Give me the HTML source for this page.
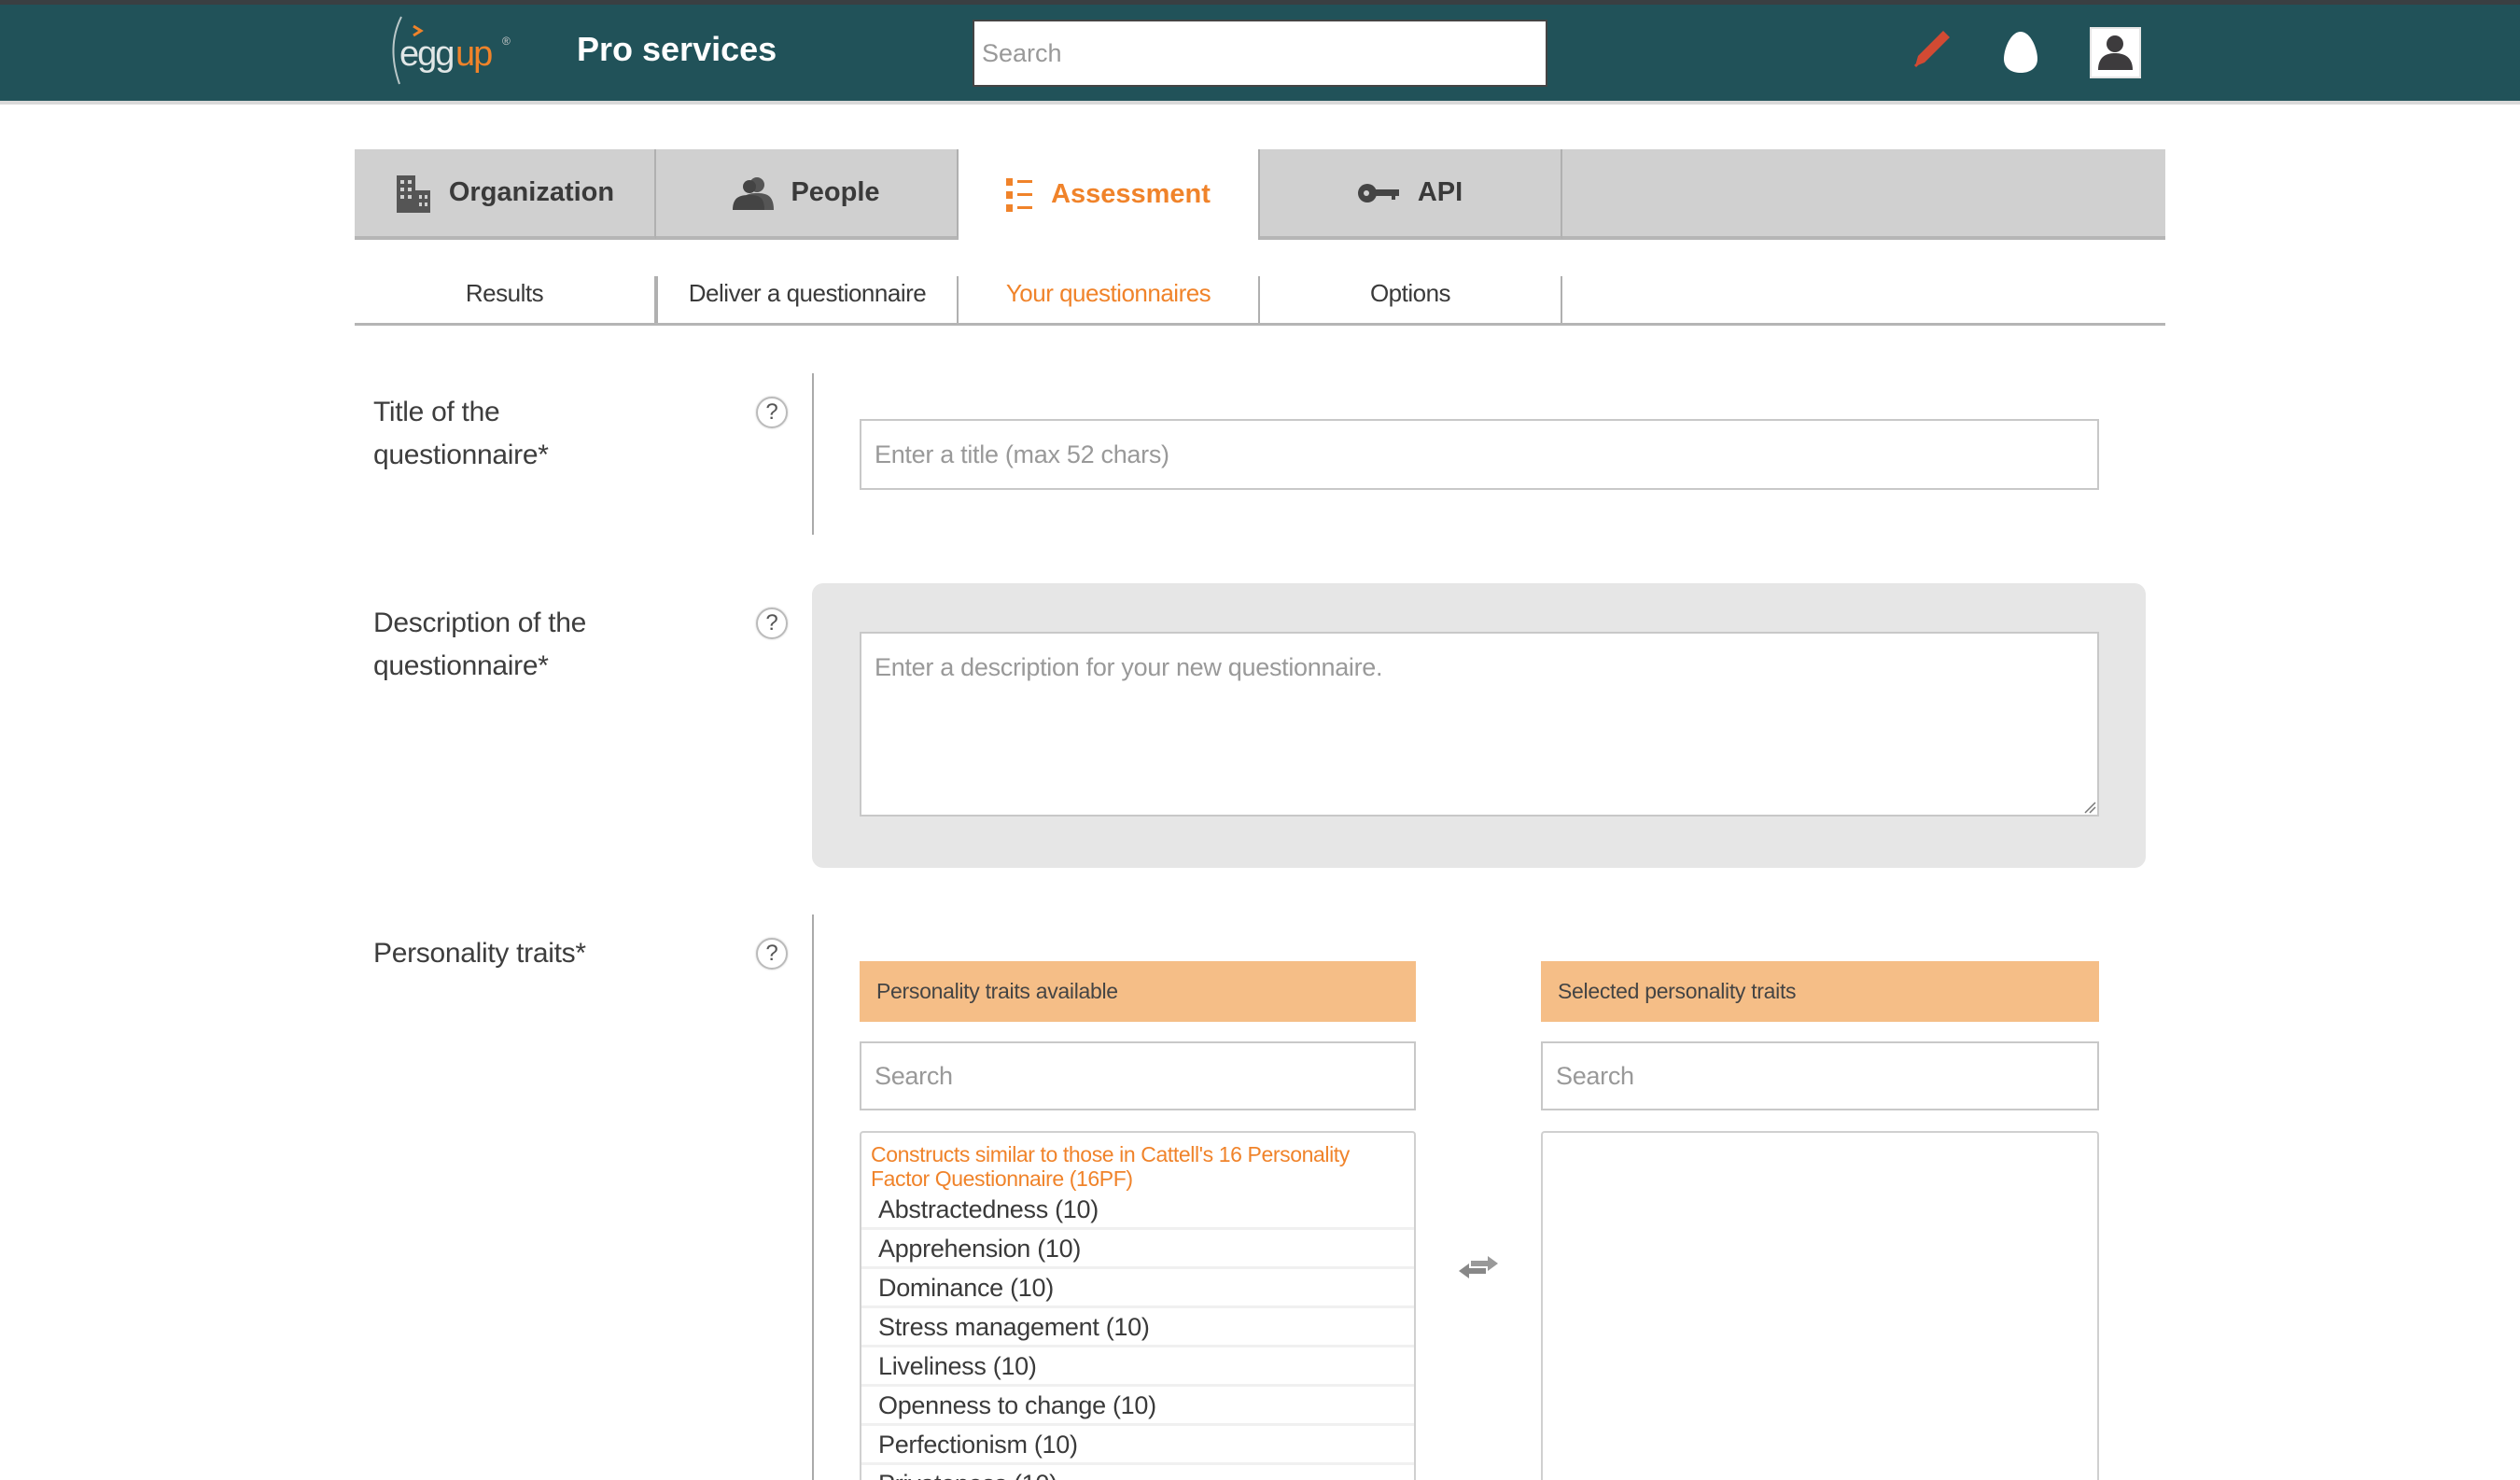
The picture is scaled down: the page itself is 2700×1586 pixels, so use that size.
<!DOCTYPE html>
<html style="overflow:hidden;height:1586px"><head><meta charset="utf-8"><style>
*{margin:0;padding:0;box-sizing:border-box}
body{width:2700px;height:1586px;overflow:hidden;background:#fff;font-family:"Liberation Sans",sans-serif;color:#3a3a3a;position:relative}
.a{position:absolute}
.hdr{left:0;top:0;width:2700px;height:112px;background:#215259;border-top:5px solid #3a3f42;border-bottom:4px solid #d9d9d9}
.tab{top:160px;height:97px;background:#d0d0d0;border-right:2px solid #b0b0b0;border-bottom:4px solid #b5b5b5;font-weight:bold;font-size:29px;display:flex;align-items:center;justify-content:center;gap:18px;color:#3a3a3a}
.sub{top:296px;height:50px;border-right:2px solid #b0b0b0;font-size:26px;text-align:center;line-height:36px;letter-spacing:-0.5px}
.lbl{font-size:30px;line-height:46px;color:#3d3d3d;letter-spacing:-0.3px}
.help{width:34px;height:34px;border:2px solid #bbb;border-radius:50%;font-size:24px;text-align:center;line-height:30px;color:#555;box-shadow:0 0 2px #ccc}
.vl{width:2px;background:#aaa}
.inp{border:2px solid #c8c8c8;background:#fff;font-size:27px;color:#999;padding-left:14px;letter-spacing:-0.3px}
.oh{background:#f5be87;font-size:23px;color:#444;padding-left:18px;line-height:65px;letter-spacing:-0.3px}
.item{height:42px;border-bottom:3px solid #f0f0f0;font-size:27px;line-height:40px;padding-left:18px;color:#3a3a3a;letter-spacing:-0.3px}
</style></head><body>
<div class="a hdr"></div>
<svg class="a" style="left:410px;top:14px" width="150" height="80" viewBox="0 0 150 80">
<path d="M20 4 Q4 36 18 76" stroke="#b9c7c8" stroke-width="2" fill="none"/>
<path d="M33 14 l8 5 l-8 5" stroke="#f0832a" stroke-width="3" fill="none"/>
<text x="18" y="56" font-family="Liberation Sans" font-size="38" fill="#e0e6e6" letter-spacing="-2">egg</text>
<text x="78" y="56" font-family="Liberation Sans" font-size="38" fill="#f0832a" letter-spacing="-2">up</text>
<text x="128" y="34" font-size="12" fill="#ccc">®</text>
</svg>
<div class="a" style="left:618px;top:32px;font-size:36px;font-weight:bold;color:#fff">Pro services</div>
<div class="a" style="left:1042px;top:21px;width:616px;height:72px;background:#fff;border:2px solid #444;font-size:27px;color:#999;line-height:68px;padding-left:8px">Search</div>
<svg class="a" style="left:2048px;top:30px" width="44" height="44" viewBox="0 0 44 44"><path d="M34 3 l7 7 L14 37 L4 41 L7 30 Z" fill="#d24a33"/><path d="M4 41 l3-3" stroke="#d24a33" stroke-width="3"/></svg>
<svg class="a" style="left:2146px;top:33px" width="38" height="46" viewBox="0 0 38 46"><path d="M19 1 C8 1 1 20 1 30 C1 40 9 45 19 45 C29 45 37 40 37 30 C37 20 30 1 19 1Z" fill="#fff"/></svg>
<div class="a" style="left:2239px;top:29px;width:55px;height:55px;background:#fff;border:2px solid #e5e5e5">
<svg width="51" height="51" viewBox="0 0 51 51"><circle cx="25" cy="16" r="9" fill="#3d3b3d"/><path d="M7 44 C7 28 18 26 25 26 C32 26 44 28 44 44Z" fill="#3d3b3d"/></svg></div>

<div class="a tab" style="left:380px;width:323px"><svg width="40" height="42" viewBox="0 0 40 42"><rect x="2" y="2" width="20" height="40" fill="#555"/><rect x="22" y="18" width="16" height="24" fill="#555"/><g fill="#d0d0d0"><rect x="6" y="7" width="4" height="4"/><rect x="14" y="7" width="4" height="4"/><rect x="6" y="15" width="4" height="4"/><rect x="14" y="15" width="4" height="4"/><rect x="6" y="23" width="4" height="4"/><rect x="14" y="23" width="4" height="4"/><rect x="26" y="23" width="3" height="4"/><rect x="32" y="23" width="3" height="4"/><rect x="26" y="31" width="3" height="4"/><rect x="32" y="31" width="3" height="4"/></g></svg>Organization</div>
<div class="a tab" style="left:703px;width:324px"><svg width="44" height="36" viewBox="0 0 44 36"><circle cx="26" cy="9" r="8" fill="#555"/><path d="M8 36 C8 20 16 18 26 18 C36 18 44 20 44 36Z" fill="#555"/><circle cx="18" cy="11" r="7" fill="#444"/><path d="M0 36 C0 22 8 20 18 20 C28 20 34 22 34 36Z" fill="#444"/></svg>People</div>
<div class="a tab" style="left:1027px;width:323px;background:#fff;border-bottom:none;color:#f0832a"><svg width="30" height="36" viewBox="0 0 30 36"><g fill="#f0832a"><rect x="0" y="0" width="7" height="8"/><rect x="0" y="14" width="7" height="8"/><rect x="0" y="28" width="7" height="8"/><rect x="12" y="2" width="16" height="3"/><rect x="12" y="16" width="16" height="3"/><rect x="12" y="30" width="16" height="3"/></g></svg>Assessment</div>
<div class="a tab" style="left:1350px;width:324px"><svg width="46" height="24" viewBox="0 0 46 24"><circle cx="10" cy="12" r="10" fill="#444"/><rect x="16" y="8" width="28" height="7" fill="#444"/><rect x="36" y="14" width="4" height="5" fill="#444"/><circle cx="9" cy="12" r="3" fill="#d0d0d0"/></svg>API</div>
<div class="a tab" style="left:1674px;width:646px;border-right:none"></div>

<div class="a sub" style="left:380px;width:323px">Results</div>
<div class="a sub" style="left:703px;width:324px;border-left:2px solid #b0b0b0">Deliver a questionnaire</div>
<div class="a sub" style="left:1027px;width:323px;color:#f0832a">Your questionnaires</div>
<div class="a sub" style="left:1350px;width:324px">Options</div>
<div class="a" style="left:380px;top:346px;width:1940px;height:3px;background:#b5b5b5"></div>

<div class="a lbl" style="left:400px;top:419px">Title of the<br>questionnaire*</div>
<div class="a help" style="left:810px;top:425px">?</div>
<div class="a vl" style="left:870px;top:400px;height:173px"></div>
<div class="a inp" style="left:921px;top:449px;width:1328px;height:76px;line-height:72px">Enter a title (max 52 chars)</div>

<div class="a lbl" style="left:400px;top:645px">Description of the<br>questionnaire*</div>
<div class="a help" style="left:810px;top:651px">?</div>
<div class="a" style="left:870px;top:625px;width:1429px;height:305px;background:#e6e6e6;border-radius:12px"></div>
<div class="a inp" style="left:921px;top:677px;width:1328px;height:198px;padding-top:20px;line-height:32px">Enter a description for your new questionnaire.</div>
<svg class="a" style="left:2232px;top:858px" width="14" height="14"><path d="M2 13 L13 2 M7 13 L13 7" stroke="#777" stroke-width="1.5"/></svg>

<div class="a lbl" style="left:400px;top:999px">Personality traits*</div>
<div class="a help" style="left:810px;top:1005px">?</div>
<div class="a vl" style="left:870px;top:980px;height:606px"></div>
<div class="a oh" style="left:921px;top:1030px;width:596px;height:65px">Personality traits available</div>
<div class="a oh" style="left:1651px;top:1030px;width:598px;height:65px">Selected personality traits</div>
<div class="a inp" style="left:921px;top:1116px;width:596px;height:74px;line-height:70px">Search</div>
<div class="a inp" style="left:1651px;top:1116px;width:598px;height:74px;line-height:70px">Search</div>
<div class="a" style="left:921px;top:1212px;width:596px;height:374px;border:2px solid #d0d0d0;border-bottom:none;border-radius:4px 4px 0 0;overflow:hidden">
<div style="color:#f0832a;font-size:23px;line-height:26px;padding:10px 60px 0 10px;letter-spacing:-0.4px">Constructs similar to those in Cattell's 16 Personality Factor Questionnaire (16PF)</div>
<div class="item">Abstractedness (10)</div>
<div class="item">Apprehension (10)</div>
<div class="item">Dominance (10)</div>
<div class="item">Stress management (10)</div>
<div class="item">Liveliness (10)</div>
<div class="item">Openness to change (10)</div>
<div class="item">Perfectionism (10)</div>
<div class="item">Privateness (10)</div>
</div>
<div class="a" style="left:1651px;top:1212px;width:598px;height:374px;border:2px solid #d0d0d0;border-bottom:none;border-radius:4px 4px 0 0"></div>
<svg class="a" style="left:1562px;top:1345px" width="44" height="30" viewBox="0 0 44 30"><path d="M14 6 H32 V1 L43 9 L32 17 V12 H14Z" fill="#999"/><path d="M30 14 H12 V9 L1 17 L12 25 V20 H30Z" fill="#888"/></svg>
</body></html>
